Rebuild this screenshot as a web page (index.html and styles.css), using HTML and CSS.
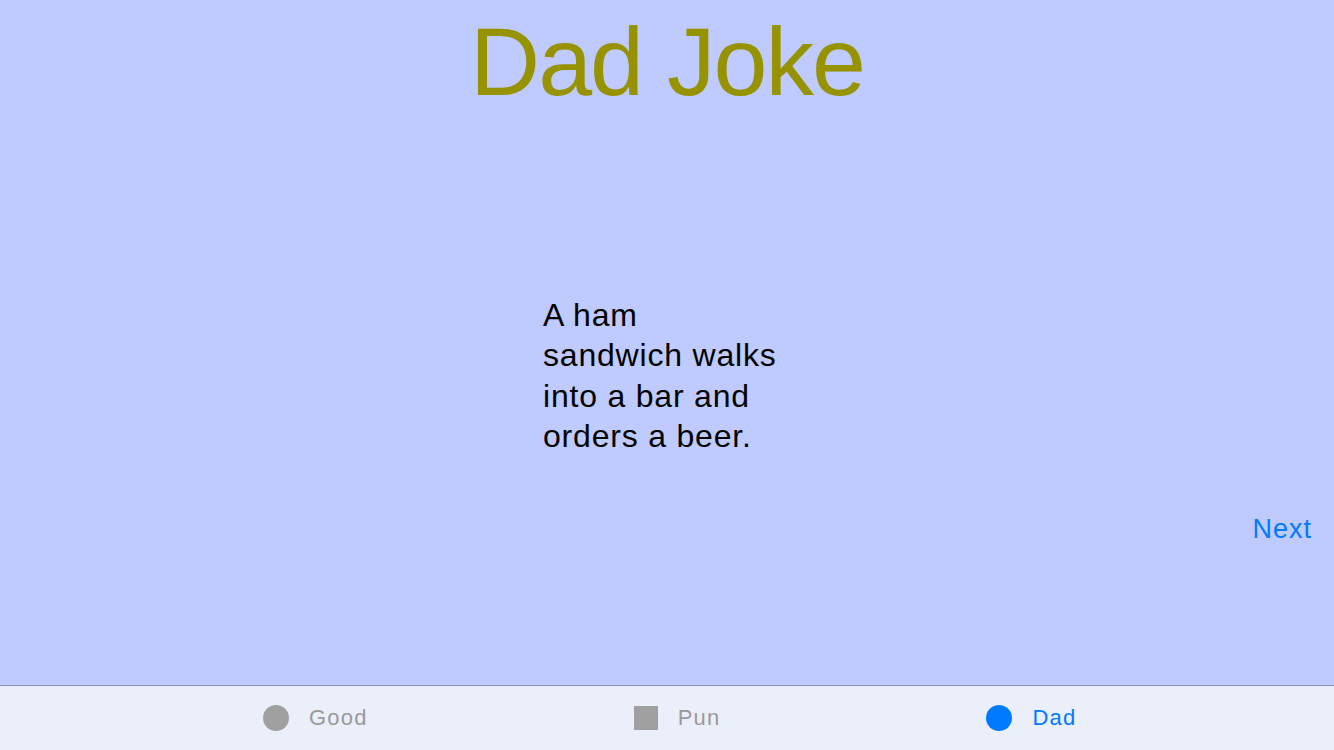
FILE: index.html
```html
<!DOCTYPE html>
<html lang="en">
<head>
<meta charset="utf-8">
<title>Dad Joke</title>
<link rel="stylesheet" href="styles.css">
</head>
<body>
<div class="app">
  <header class="title-bar">
    <h1 class="title">Dad Joke</h1>
  </header>
  <main class="content">
    <p class="joke">A ham sandwich walks into a bar and orders a beer.</p>
    <div class="actions">
      <button class="next-btn" type="button">Next</button>
    </div>
  </main>
  <nav class="tabbar">
    <div class="tab">
      <span class="icon icon-circle"></span>
      <span class="tab-label">Good</span>
    </div>
    <div class="tab">
      <span class="icon icon-square"></span>
      <span class="tab-label">Pun</span>
    </div>
    <div class="tab tab-active">
      <span class="icon icon-circle"></span>
      <span class="tab-label">Dad</span>
    </div>
  </nav>
</div>
</body>
</html>
```

FILE: styles.css
```css
* {
  box-sizing: border-box;
}

html, body {
  margin: 0;
  padding: 0;
}

body {
  font-family: "Liberation Sans", Arial, sans-serif;
  background: #bfcbfe;
}

.app {
  width: 1334px;
  height: 750px;
  display: flex;
  flex-direction: column;
  overflow: hidden;
}

.title-bar {
  padding-top: 13px;
  display: flex;
  justify-content: center;
}

.title {
  margin: 0;
  font-size: 97px;
  line-height: 97px;
  font-weight: normal;
  letter-spacing: -2px;
  color: #979300;
}

.content {
  flex: 1;
  display: flex;
  flex-direction: column;
}

.joke {
  margin: 185px auto 0;
  width: 248px;
  padding-right: 10px;
  font-size: 32px;
  line-height: 40.3px;
  letter-spacing: 0.8px;
  color: #000;
}

.actions {
  display: flex;
  justify-content: flex-end;
  padding-right: 22px;
  margin-top: 57px;
}

.next-btn {
  border: none;
  background: none;
  padding: 0;
  font-family: "Liberation Sans", Arial, sans-serif;
  font-size: 27px;
  line-height: 32px;
  letter-spacing: 1px;
  color: #007aff;
  cursor: pointer;
}

.tabbar {
  height: 65px;
  border-top: 1px solid #8b91b2;
  background: #ebeff9;
  display: flex;
  justify-content: flex-start;
  align-items: center;
  padding-left: 263px;
  gap: 266px;
}

.tab {
  display: flex;
  align-items: center;
  gap: 20px;
  color: #9a9a9a;
}

.tab-label {
  font-size: 22px;
  line-height: 26px;
  letter-spacing: 1.2px;
}

.icon {
  display: block;
  background: #a0a0a0;
}

.icon-circle {
  width: 26px;
  height: 26px;
  border-radius: 50%;
}

.icon-square {
  width: 24px;
  height: 24px;
}

.tab-active {
  color: #007aff;
}

.tab-active .icon {
  background: #007aff;
}
```
